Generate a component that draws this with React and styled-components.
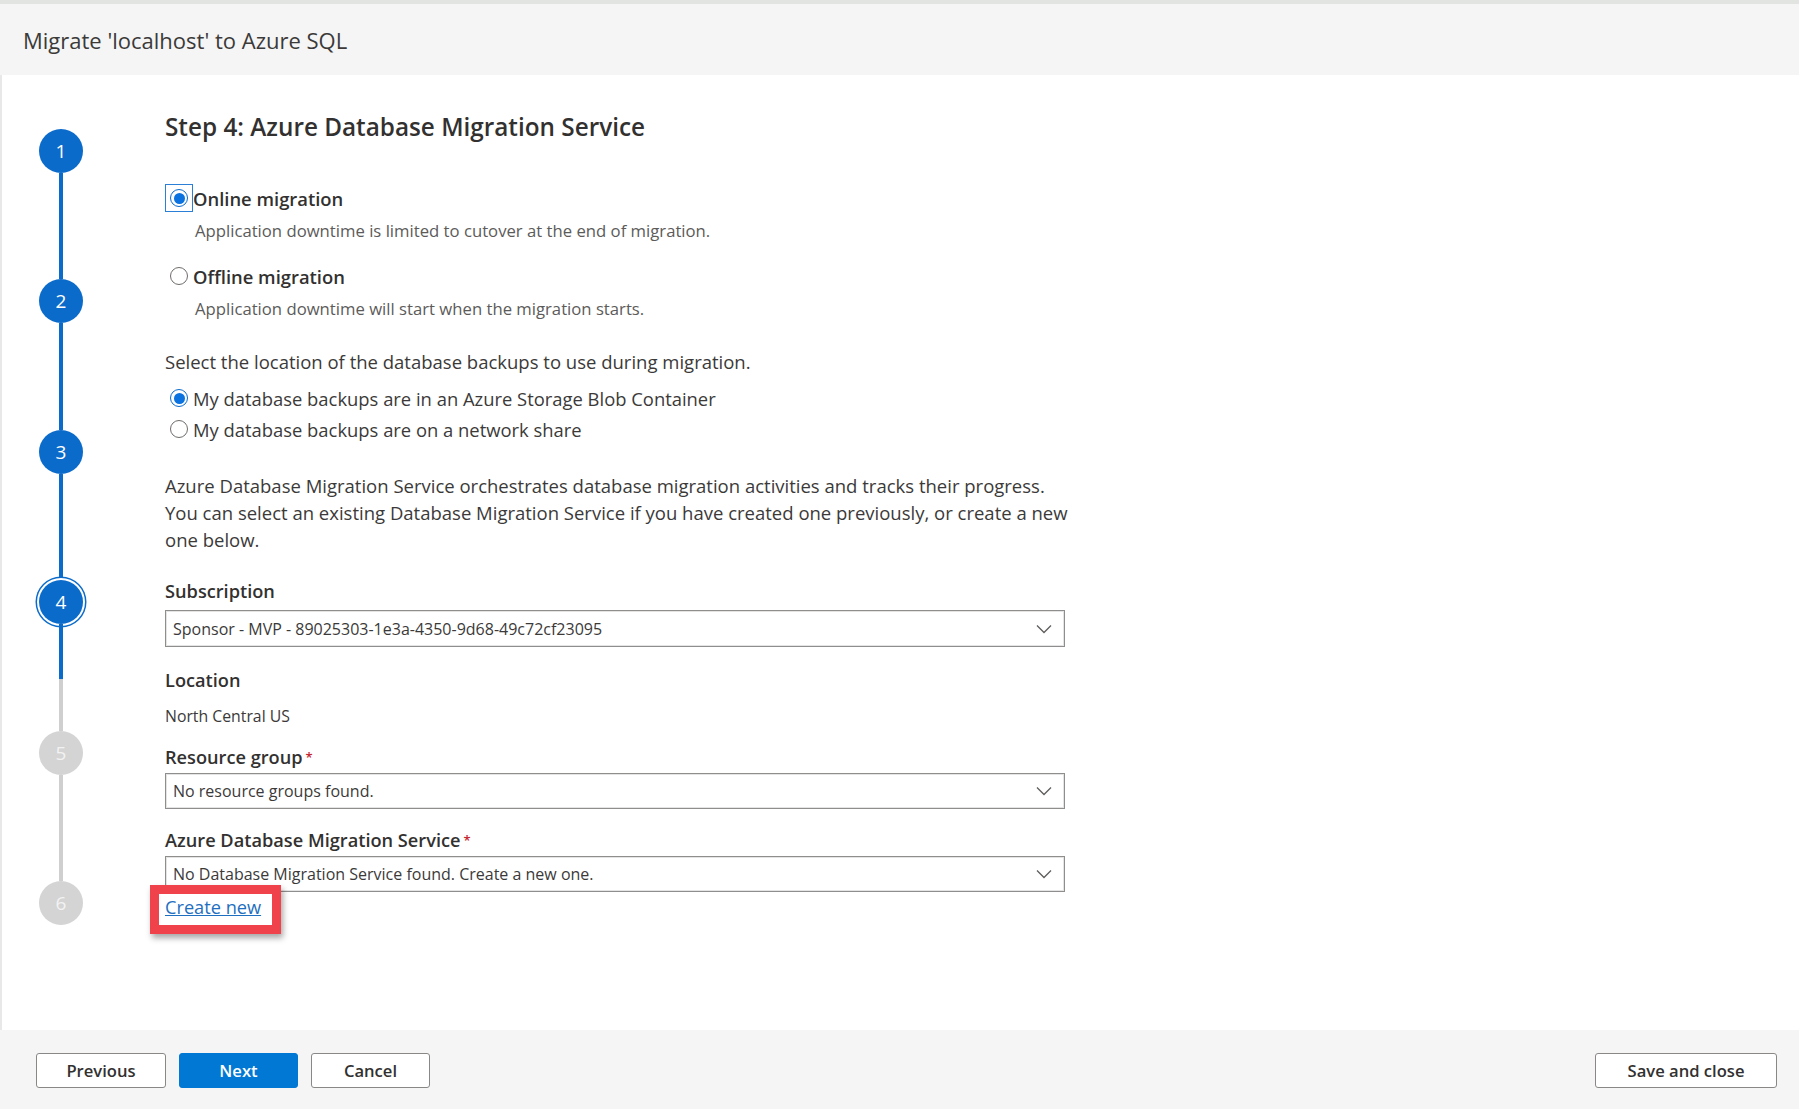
import React from "react";
import styled, { createGlobalStyle } from "styled-components";

const GlobalStyle = createGlobalStyle`
  html, body {
    margin: 0;
    padding: 0;
    background: #ffffff;
  }
  body {
    font-family: "Open Sans", "Noto Sans", Arial, sans-serif;
    color: #323130;
  }
`;

const BLUE = "#0b6bcb";
const GREY = "#cfcfcf";

const Page = styled.div`
  width: 1799px;
  height: 1109px;
  display: flex;
  flex-direction: column;
  overflow: hidden;
  border-top: 4px solid #e2e4e2;
  box-sizing: border-box;
`;

const Header = styled.header`
  height: 71px;
  flex: none;
  background: #f5f5f5;
  display: flex;
  align-items: center;
  padding-left: 23px;
  box-sizing: border-box;
  font-size: 22px;
  color: #3b3a39;
`;

const Body = styled.div`
  flex: 1;
  display: flex;
  border-left: 2px solid #e8e8e8;
  min-height: 0;
`;

const Stepper = styled.nav`
  width: 118px;
  flex: none;
  display: flex;
  flex-direction: column;
  align-items: center;
  padding-top: 54px;
`;

const StepCircle = styled.div`
  width: 44px;
  height: 44px;
  border-radius: 50%;
  flex: none;
  display: flex;
  align-items: center;
  justify-content: center;
  background: ${(p) => (p.$done ? BLUE : "#d4d4d4")};
  color: ${(p) => (p.$done ? "#ffffff" : "#f2f2f2")};
  font-size: 19px;
  box-shadow: ${(p) =>
    p.$active ? `0 0 0 2px #ffffff, 0 0 0 3.5px ${BLUE}` : "none"};
`;

const Connector = styled.div`
  width: 4px;
  height: 106.4px;
  flex: none;
  background: ${(p) =>
    `linear-gradient(to bottom, ${BLUE} 0, ${BLUE} ${p.$fill}%, ${GREY} ${p.$fill}%, ${GREY} 100%)`};
`;

const Content = styled.main`
  flex: 1;
  margin-left: 45px;
  padding-top: 36px;
  display: flex;
  flex-direction: column;
  align-items: flex-start;
`;

const Title = styled.h1`
  margin: 0 0 41px;
  font-size: 24.3px;
  line-height: 32px;
  font-weight: 600;
  color: #323130;
`;

const RadioRow = styled.label`
  display: flex;
  align-items: center;
  height: 28px;
  font-size: 18.4px;
  font-weight: ${(p) => (p.$strong ? 600 : 400)};
  color: ${(p) => (p.$strong ? "#323130" : "#3b3a39")};
  margin-top: ${(p) => p.$top || 0}px;
`;

const RadioSlot = styled.span`
  width: 28px;
  height: 28px;
  flex: none;
  box-sizing: border-box;
  display: flex;
  align-items: center;
  justify-content: center;
  border: 1.5px solid ${(p) => (p.$focused ? "#2b7fd6" : "transparent")};
`;

const RadioDot = styled.span`
  width: 18px;
  height: 18px;
  border-radius: 50%;
  box-sizing: border-box;
  border: ${(p) => (p.$checked ? `1.5px solid ${BLUE}` : "1px solid #6f6d6b")};
  display: flex;
  align-items: center;
  justify-content: center;
  &::after {
    content: "";
    width: 11px;
    height: 11px;
    border-radius: 50%;
    background: ${(p) => (p.$checked ? "#0a73e0" : "transparent")};
  }
`;

const Hint = styled.p`
  margin: 9px 0 0 30px;
  font-size: 16.7px;
  line-height: 20px;
  color: #5c5b5a;
`;

const Text = styled.p`
  margin: ${(p) => p.$top || 0}px 0 0;
  font-size: 18.5px;
  line-height: ${(p) => p.$lh || 24}px;
  color: #3b3a39;
  max-width: 910px;
`;

const Label = styled.div`
  margin-top: ${(p) => p.$top || 0}px;
  font-size: 18.2px;
  line-height: 24px;
  font-weight: 600;
  color: #323130;
`;

const Required = styled.span`
  color: #c4262e;
  font-size: 13px;
  margin-left: 3px;
  vertical-align: top;
`;

const Select = styled.div`
  margin-top: ${(p) => p.$gap || 4}px;
  width: 900px;
  height: ${(p) => p.$h || 36}px;
  box-sizing: border-box;
  border: 1px solid #8f8e8d;
  box-shadow: inset 0 0 0 1px #e4e4e4;
  display: flex;
  align-items: center;
  justify-content: space-between;
  padding: 0 12px 0 7px;
  font-size: 16px;
  color: #3b3a39;
`;

const Value = styled.div`
  margin-top: 14px;
  font-size: 15.8px;
  line-height: 20px;
  color: #3b3a39;
`;

const LinkWrap = styled.div`
  position: relative;
  margin-top: 5px;
`;

const Link = styled.a`
  font-size: 18.2px;
  line-height: 20px;
  color: #1f6fc0;
  text-decoration: underline;
  position: relative;
  z-index: 1;
`;

const Callout = styled.span`
  position: absolute;
  left: -15px;
  top: -12px;
  width: 131px;
  height: 49px;
  box-sizing: border-box;
  border: 9px solid #f0424a;
  box-shadow: 2px 4px 6px rgba(0, 0, 0, 0.35);
  pointer-events: none;
`;

const Footer = styled.footer`
  height: 79px;
  flex: none;
  background: #f5f5f5;
  display: flex;
  align-items: center;
  gap: 13px;
  padding: 2px 22px 0 36px;
  box-sizing: border-box;
`;

const Button = styled.button`
  width: ${(p) => p.$w}px;
  height: 35px;
  border-radius: 3px;
  border: 1px solid ${(p) => (p.$primary ? "#0078d4" : "#8a8886")};
  background: ${(p) => (p.$primary ? "#0078d4" : "#ffffff")};
  color: ${(p) => (p.$primary ? "#ffffff" : "#323130")};
  font-family: inherit;
  font-size: 16.6px;
  font-weight: 600;
  cursor: pointer;
  margin-left: ${(p) => (p.$push ? "auto" : "0")};
`;

const Chevron = () => (
  <svg width="16" height="10" viewBox="0 0 16 10" fill="none">
    <path d="M1 1.5 L8 8.5 L15 1.5" stroke="#5f5e5c" strokeWidth="1.3" />
  </svg>
);

const Radio = ({ checked, focused }) => (
  <RadioSlot $focused={focused}>
    <RadioDot $checked={checked} />
  </RadioSlot>
);

const steps = [
  { n: 1, done: true, fill: 100 },
  { n: 2, done: true, fill: 100 },
  { n: 3, done: true, fill: 100 },
  { n: 4, done: true, active: true, fill: 51 },
  { n: 5, done: false, fill: 0 },
  { n: 6, done: false },
];

export default function App() {
  return (
    <>
      <GlobalStyle />
      <Page>
        <Header>Migrate 'localhost' to Azure SQL</Header>
        <Body>
          <Stepper>
            {steps.map((s) => (
              <React.Fragment key={s.n}>
                <StepCircle $done={s.done} $active={s.active}>
                  {s.n}
                </StepCircle>
                {s.fill !== undefined && <Connector $fill={s.fill} />}
              </React.Fragment>
            ))}
          </Stepper>
          <Content>
            <Title>Step 4: Azure Database Migration Service</Title>

            <RadioRow $strong>
              <Radio checked focused />
              Online migration
            </RadioRow>
            <Hint>Application downtime is limited to cutover at the end of migration.</Hint>

            <RadioRow $strong $top={21}>
              <Radio />
              Offline migration
            </RadioRow>
            <Hint>Application downtime will start when the migration starts.</Hint>

            <Text $top={31}>Select the location of the database backups to use during migration.</Text>
            <RadioRow $top={10}>
              <Radio checked />
              My database backups are in an Azure Storage Blob Container
            </RadioRow>
            <RadioRow $top={3}>
              <Radio />
              My database backups are on a network share
            </RadioRow>

            <Text $top={29} $lh={27}>
              Azure Database Migration Service orchestrates database migration activities and tracks their progress.
              You can select an existing Database Migration Service if you have created one previously, or create a new
              one below.
            </Text>

            <Label $top={26}>Subscription</Label>
            <Select $h={37} $gap={7}>
              <span>Sponsor - MVP - 89025303-1e3a-4350-9d68-49c72cf23095</span>
              <Chevron />
            </Select>

            <Label $top={21}>Location</Label>
            <Value>North Central US</Value>

            <Label $top={19}>
              Resource group<Required>*</Required>
            </Label>
            <Select>
              <span>No resource groups found.</span>
              <Chevron />
            </Select>

            <Label $top={19}>
              Azure Database Migration Service<Required>*</Required>
            </Label>
            <Select>
              <span>No Database Migration Service found. Create a new one.</span>
              <Chevron />
            </Select>

            <LinkWrap>
              <Callout />
              <Link href="#">Create new</Link>
            </LinkWrap>
          </Content>
        </Body>
        <Footer>
          <Button $w={130}>Previous</Button>
          <Button $w={119} $primary>
            Next
          </Button>
          <Button $w={119}>Cancel</Button>
          <Button $w={182} $push>
            Save and close
          </Button>
        </Footer>
      </Page>
    </>
  );
}
